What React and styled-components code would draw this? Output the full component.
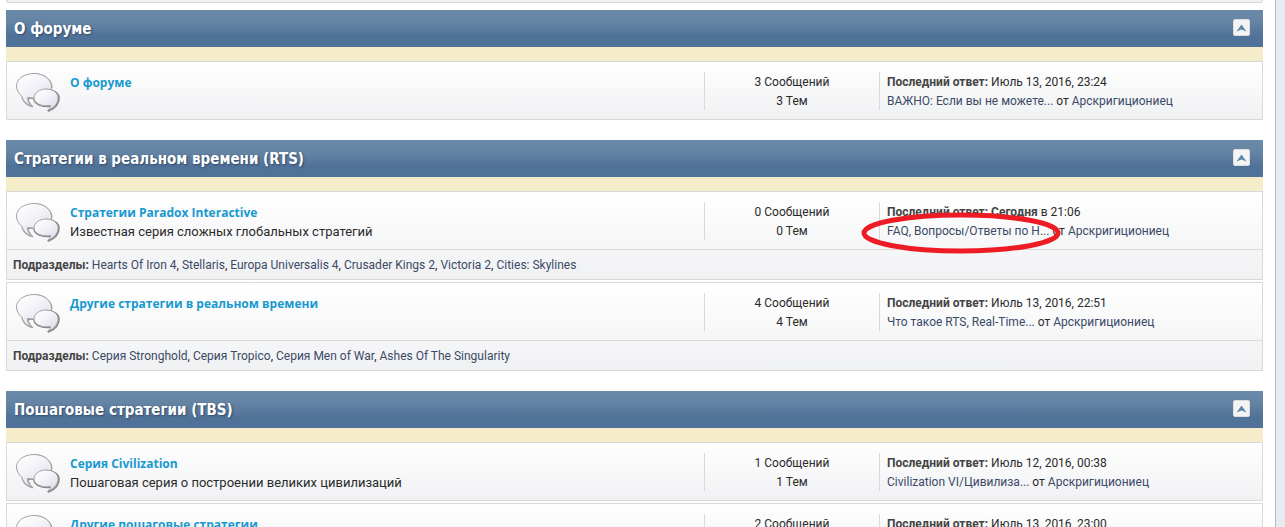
import React, { useState } from 'react'
import styled, { createGlobalStyle } from 'styled-components'

const categories = [
  {
    title: 'О форуме',
    boards: [
      {
        name: 'О форуме',
        posts: 3,
        topics: 3,
        date: 'Июль 13, 2016, 23:24',
        topic: 'ВАЖНО: Если вы не можете...',
      },
    ],
  },
  {
    title: 'Стратегии в реальном времени (RTS)',
    boards: [
      {
        name: 'Стратегии Paradox Interactive',
        text: 'Известная серия сложных глобальных стратегий',
        posts: 0,
        topics: 0,
        today: 'Сегодня',
        date: 'в 21:06',
        topic: 'FAQ, Вопросы/Ответы по H...',
        marked: true,
        children: ['Hearts Of Iron 4', 'Stellaris', 'Europa Universalis 4', 'Crusader Kings 2', 'Victoria 2', 'Cities: Skylines'],
      },
      {
        name: 'Другие стратегии в реальном времени',
        posts: 4,
        topics: 4,
        date: 'Июль 13, 2016, 22:51',
        topic: 'Что такое RTS, Real-Time...',
        children: ['Серия Stronghold', 'Серия Tropico', 'Серия Men of War', 'Ashes Of The Singularity'],
      },
    ],
  },
  {
    title: 'Пошаговые стратегии (TBS)',
    boards: [
      {
        name: 'Серия Civilization',
        text: 'Пошаговая серия о построении великих цивилизаций',
        posts: 1,
        topics: 1,
        date: 'Июль 12, 2016, 00:38',
        topic: 'Civilization VI/Цивилиза...',
      },
      {
        name: 'Другие пошаговые стратегии',
        posts: 2,
        topics: 2,
        date: 'Июль 13, 2016, 23:00',
      },
    ],
  },
]

const BubblesIcon = () => (
  <Bubbles viewBox="0 0 46 42" aria-hidden="true">
    <defs>
      <linearGradient id="bubble" x1="0" y1="0" x2="0.7" y2="1">
        <stop offset="0" stopColor="#ffffff" />
        <stop offset="0.4" stopColor="#f6f6fa" />
        <stop offset="1" stopColor="#dedeee" />
      </linearGradient>
    </defs>
    <g strokeLinejoin="round">
      <path
        d="M19.500 2C29 2 36.800 8 36.800 15.500L23 26.500L13 26C13 29.500 14.500 32 17.500 34.500C12 33 8.500 30 7 25"
        fill="none"
        stroke="#999"
        strokeWidth="1.400"
      />
      <path
        d="M19 1.500C29 1.500 36.500 7.500 36.500 15C36.500 22 30 26.500 23 26.500L12.500 25.500C12.500 29 14 32 17 34C11.500 32.500 8 29 7 24.500C3.500 21.500 1.500 18 1.500 14C1.500 7 9 1.500 19 1.500Z"
        fill="url(#bubble)"
        stroke="#a3a3a3"
      />
      <path
        d="M32 17.500C39 17.500 44 21.500 44 26C44 31 41 36 33.500 39C35.500 37 36.500 35.500 36.500 34C26 35.500 19 31.500 19 26.500"
        fill="none"
        stroke="#808080"
        strokeWidth="1.600"
      />
      <path
        d="M31 17C38 17 43 21 43 25.500C43 30.500 40 35.500 32.500 38.500C34.500 36.500 35.500 35 35.500 33.500C26 35 19 31 19 26C19 21 24.500 17 31 17Z"
        fill="url(#bubble)"
        stroke="#a3a3a3"
      />
    </g>
  </Bubbles>
)

const Board = ({ board }) => (
  <BoardBox>
    <BoardMain>
      <BubblesIcon />
      <Info>
        <BoardName href="#board">{board.name}</BoardName>
        {board.text && <Description>{board.text}</Description>}
      </Info>
      <Stats>
        <Line>{board.posts} Сообщений</Line>
        <Line>{board.topics} Тем</Line>
      </Stats>
      <LastPost>
        <Line>
          <Strong>Последний ответ: {board.today}</Strong> {board.date}
        </Line>
        {board.topic && (
          <Line>
            <TextLink href="#topic">{board.topic}</TextLink> от <TextLink href="#user">Арскригициониец</TextLink>
          </Line>
        )}
        {board.marked && (
          <Marker viewBox="0 0 200 42" aria-hidden="true">
            <ellipse cx="100" cy="21" rx="97" ry="18" fill="none" stroke="#ed1c24" strokeWidth="5" />
          </Marker>
        )}
      </LastPost>
    </BoardMain>
    {board.children && (
      <Children>
        <Strong>Подразделы:</Strong>{' '}
        {board.children.map((child, i) => (
          <React.Fragment key={child}>
            {i > 0 && ', '}
            <TextLink href="#child">{child}</TextLink>
          </React.Fragment>
        ))}
      </Children>
    )}
  </BoardBox>
)

const Category = ({ category }) => {
  const [open, setOpen] = useState(true)

  return (
    <Section>
      <Header>
        <Title>{category.title}</Title>
        <Toggle type="button" aria-label="Свернуть" aria-expanded={open} onClick={() => setOpen(!open)}>
          <Arrow viewBox="0 0 11 8" $open={open}>
            <path d="M5.500 0.500L10.500 7.500L5.500 5.500L0.500 7.500Z" fill="#5f86a8" />
          </Arrow>
        </Toggle>
      </Header>
      <Strip />
      {open && (
        <Boards>
          {category.boards.map((board) => (
            <Board key={board.name} board={board} />
          ))}
        </Boards>
      )}
    </Section>
  )
}

const App = () => {
  return (
    <>
      <GlobalStyle />
      <Page>
        <TopPanel />
        <Categories>
          {categories.map((category) => (
            <Category key={category.title} category={category} />
          ))}
        </Categories>
      </Page>
    </>
  )
}

export default App

const GlobalStyle = createGlobalStyle`
    * {
        box-sizing: border-box;
    }
    html {
        scrollbar-width: none;
    }
    body {
        margin: 0;
        background: #e7ecf1;
        color: #2a2a2a;
        font-family: Roboto, "Noto Sans", sans-serif;
        font-size: 12px;
        line-height: 19px;
    }
`;
const Page = styled.main`
    min-height: 100vh;
    margin-right: 9px;
    padding: 0 12px 20px 6px;
    background: #fff;
    border-right: 1px solid #b4babf;
`;
const TopPanel = styled.div`
    height: 3px;
    margin-bottom: 7px;
    background: #f1f1f1;
    border: 1px solid #d8d8d8;
    border-top: 0;
    border-radius: 0 0 3px 3px;
`;
const Categories = styled.div`
    display: flex;
    flex-direction: column;
    gap: 20px;
`;
const Section = styled.section``;
const Header = styled.header`
    display: flex;
    align-items: center;
    justify-content: space-between;
    height: 37px;
    padding: 0 13px 2px 8px;
    background: linear-gradient(#6b89a8 0%, #6685a5 30%, #517298 70%, #517298 100%);
`;
const Title = styled.h2`
    margin: 0;
    padding-top: 4px;
    color: #fff;
    font-family: "DejaVu Sans Condensed", "DejaVu Sans", sans-serif;
    font-size: 15px;
    font-weight: bold;
    text-shadow: 1px 1px 2px #2f4a68;
`;
const Toggle = styled.button`
    display: flex;
    align-items: center;
    justify-content: center;
    width: 17px;
    height: 17px;
    padding: 0;
    background: #f4f4f4;
    border: 1px solid #ddd;
    border-radius: 2px;
    cursor: pointer;
`;
const Arrow = styled.svg`
    width: 11px;
    height: 8px;
    transform: ${({ $open }) => ($open ? 'none' : 'rotate(180deg)')};
`;
const Strip = styled.div`
    height: 14px;
    background: #f5edc9;
`;
const Boards = styled.div`
    display: flex;
    flex-direction: column;
    gap: 2px;
`;
const BoardBox = styled.article`
    background: linear-gradient(#fff, #f0f1f3);
    border: 1px solid #d9d9d9;
`;
const BoardMain = styled.div`
    display: grid;
    grid-template-columns: 46px 1fr 175px 383px;
    align-items: center;
    height: 57px;
    padding-left: 8px;
`;
const Bubbles = styled.svg`
    width: 46px;
    height: 42px;
    margin-top: 4px;
`;
const Info = styled.div`
    height: 38px;
    padding: 1px 0 0 9px;
`;
const BoardName = styled.a`
    display: block;
    color: #1799d0;
    font-family: "Open Sans", "Noto Sans", sans-serif;
    font-weight: bold;
    text-decoration: none;
`;
const Description = styled.div`
    font-size: 13px;
`;
const Stats = styled.div`
    height: 38px;
    padding-top: 1px;
    border-left: 1px solid #d9d9d9;
    text-align: center;
`;
const LastPost = styled.div`
    position: relative;
    height: 38px;
    padding: 1px 0 0 7px;
    border-left: 1px solid #d9d9d9;
`;
const Line = styled.div`
    white-space: nowrap;
`;
const Strong = styled.strong`
    color: #444;
`;
const TextLink = styled.a`
    color: #3b4a66;
    text-decoration: none;
`;
const Marker = styled.svg`
    position: absolute;
    top: 10px;
    left: -19px;
    width: 200px;
    height: 42px;
    pointer-events: none;
`;
const Children = styled.div`
    padding: 6px 6px 4px;
    border-top: 1px solid #d9d9d9;
`;
